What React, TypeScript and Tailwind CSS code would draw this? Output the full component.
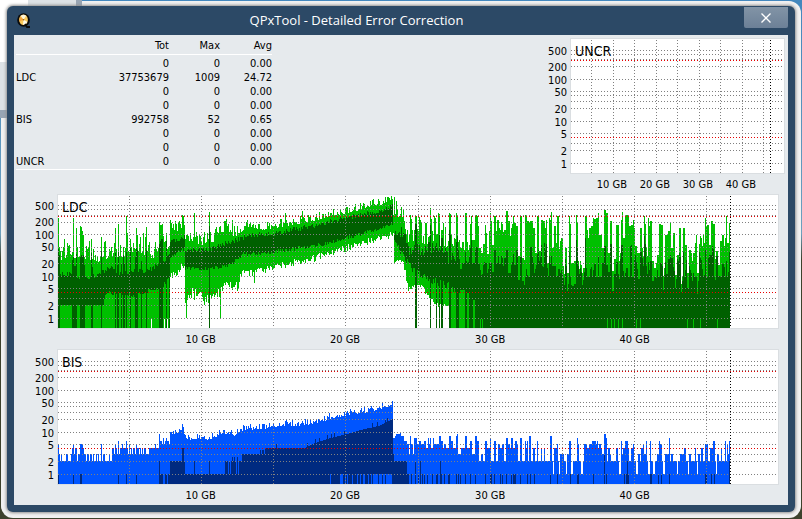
import { useMemo } from "react";

type Row = { label: string; tot: string; max: string; avg: string };

const ROWS: Row[] = [
  { label: "", tot: "0", max: "0", avg: "0.00" },
  { label: "LDC", tot: "37753679", max: "1009", avg: "24.72" },
  { label: "", tot: "0", max: "0", avg: "0.00" },
  { label: "", tot: "0", max: "0", avg: "0.00" },
  { label: "BIS", tot: "992758", max: "52", avg: "0.65" },
  { label: "", tot: "0", max: "0", avg: "0.00" },
  { label: "", tot: "0", max: "0", avg: "0.00" },
  { label: "UNCR", tot: "0", max: "0", avg: "0.00" },
];

const PLOT_W = 720;

// log scale rows of the plot
const GRID_Y = [11, 15, 20, 27, 40, 52, 56, 62, 69, 82, 94, 104, 111, 124];
const SHORT_GRID_Y = [10, 14, 20, 27, 39, 52, 56, 61, 68, 81, 93, 103, 110, 123];
const LIMITS_Y = [21, 98];
const SHORT_LIMITS_Y = [21, 97];
const Y_LABELS = [
  { text: "500", y: 11 },
  { text: "200", y: 27 },
  { text: "100", y: 40 },
  { text: "50", y: 52 },
  { text: "20", y: 69 },
  { text: "10", y: 82 },
  { text: "5", y: 94 },
  { text: "2", y: 111 },
  { text: "1", y: 124 },
];

// [x, value] key points, joined by straight lines
type Points = [number, number][];

function noise(x: number, seed: number) {
  let n = Math.imul(x + 17, 374761393) ^ Math.imul(seed + 5, 668265263);
  n = Math.imul(n ^ (n >>> 13), 1274126177);
  return ((n ^ (n >>> 16)) >>> 0) / 4294967296;
}

function lerp(points: Points, x: number) {
  for (let i = 1; i < points.length; i++) {
    if (x <= points[i][0]) {
      const [x0, y0] = points[i - 1];
      const [x1, y1] = points[i];
      return y0 + ((y1 - y0) * (x - x0)) / (x1 - x0 || 1);
    }
  }
  return points[points.length - 1][1];
}

function step(points: Points, x: number) {
  let value = points[0][1];
  for (const [px, py] of points) {
    if (px > x) break;
    value = py;
  }
  return value;
}

function column(x: number, top: number, bottom: number) {
  return bottom > top ? `M${x} ${Math.round(top)}h1V${Math.round(bottom)}h-1z` : "";
}

/* ---------- LDC ---------- */

const LDC_TOP: Points = [
  [0, 63], [8, 58], [25, 60], [40, 63], [52, 58], [66, 58], [78, 52], [90, 58], [96, 60], [102, 54], [108, 52], [111, 50],
  [112, 34], [118, 33], [126, 28], [127, 43], [145, 47], [155, 43], [165, 33], [172, 34], [176, 38], [190, 28], [205, 31],
  [222, 28], [240, 25], [256, 22], [272, 18], [290, 14], [306, 10], [322, 6], [334, 1], [335, 16], [345, 20],
  [349, 44], [372, 46], [385, 48], [402, 47],
];

const LDC_TOP_SPIKES: Points = [
  [0, 23], [6, 44], [11, 50], [15, 23], [18, 33], [22, 31], [23, 32], [24, 36], [25, 40], [33, 44], [43, 42], [47, 46], [51, 54],
  [57, 33], [60, 29], [68, 21], [69, 38], [75, 48], [78, 33], [79, 40], [82, 42], [85, 38], [88, 32], [97, 47], [101, 27],
  [102, 30], [103, 30], [104, 29], [108, 38], [112, 25], [124, 20], [125, 21], [136, 18], [151, 17], [166, 26], [174, 25],
  [227, 18], [244, 16], [352, 20], [353, 24], [357, 21], [358, 21], [361, 22], [362, 25], [363, 27], [367, 28], [368, 28],
  [372, 13], [373, 24], [376, 21], [377, 23], [380, 18], [381, 19], [385, 28], [387, 32], [391, 18], [392, 19], [398, 18],
  [399, 21], [400, 47],
];

const LDC_DARK_TOP: Points = [
  [0, 79], [10, 80], [25, 84], [40, 80], [52, 72], [58, 80], [75, 76], [90, 76], [104, 68], [111, 60], [112, 48], [126, 42],
  [127, 56], [150, 55], [165, 50], [180, 45], [190, 41], [206, 40], [222, 38], [240, 34], [258, 31], [272, 27], [288, 23],
  [306, 20], [322, 16], [334, 11], [335, 38], [345, 44], [350, 60], [372, 58], [390, 66], [402, 70],
];

const LDC_DARK_BOTTOM: Points = [
  [0, 111], [45, 110], [48, 98], [75, 100], [90, 96], [104, 92], [111, 80], [112, 61], [126, 54], [127, 73], [150, 74],
  [172, 70], [180, 64], [185, 59], [206, 58], [240, 53], [272, 48], [292, 42], [306, 38], [322, 33], [335, 28],
  [336, 46], [346, 60], [354, 72], [372, 82], [390, 89], [402, 97],
];

const LDC_BOTTOM: Points = [
  [0, 134], [111, 134], [112, 81], [118, 77], [126, 68], [127, 106], [129, 104], [134, 95], [144, 100], [150, 104],
  [155, 96], [160, 94], [172, 88], [179, 89], [184, 77], [198, 77], [215, 71], [238, 67], [256, 63], [272, 57],
  [288, 53], [306, 47], [322, 43], [335, 39], [336, 64], [345, 68], [350, 93], [362, 90], [372, 103], [378, 110],
  [393, 111], [394, 134],
];

// columns where the average reaches the floor
const LDC_FULL: [number, number][] = [
  [0, 1], [14, 16], [17, 18], [22, 26], [33, 34], [43, 43], [57, 57], [59, 60], [63, 63], [65, 66], [68, 68], [72, 72],
  [77, 79], [83, 83], [88, 88], [101, 104], [108, 108], [111, 111], [151, 151], [357, 358], [372, 372], [378, 378],
  [381, 381], [383, 384], [391, 392], [398, 400], [402, 402], [407, 408],
];

// unreadable half of the disc: every step is one sample
const LDC_TAIL: Points = [
  [402, 45], [404, 47], [407, 18], [409, 47], [411, 50], [412, 21], [414, 45], [417, 20], [419, 21], [420, 23], [421, 53],
  [423, 58], [425, 49], [427, 30], [429, 51], [431, 36], [432, 18], [434, 50], [436, 21], [438, 28], [439, 25], [442, 27],
  [444, 29], [446, 27], [448, 16], [450, 26], [452, 33], [454, 21], [456, 20], [458, 23], [460, 61], [462, 21], [464, 63],
  [466, 65], [467, 20], [469, 26], [471, 19], [472, 26], [475, 33], [477, 58], [479, 21], [481, 56], [483, 25], [485, 26],
  [487, 25], [489, 60], [491, 23], [492, 17], [494, 53], [496, 31], [498, 48], [499, 21], [501, 46], [503, 43], [505, 71],
  [507, 53], [509, 70], [511, 21], [513, 68], [516, 66], [518, 20], [520, 66], [523, 70], [525, 73], [527, 21], [529, 35],
  [531, 33], [533, 23], [536, 24], [538, 23], [540, 18], [541, 40], [544, 53], [546, 15], [548, 18], [550, 58], [552, 26],
  [554, 76], [556, 56], [558, 30], [561, 58], [563, 17], [565, 35], [567, 20], [570, 21], [571, 31], [573, 30], [575, 25],
  [577, 51], [579, 58], [582, 33], [584, 53], [586, 21], [588, 53], [590, 23], [592, 26], [594, 66], [596, 73], [598, 60],
  [601, 21], [603, 30], [605, 73], [607, 40], [610, 36], [612, 27], [613, 53], [615, 30], [617, 80], [619, 60], [621, 33],
  [623, 81], [625, 33], [627, 50], [629, 78], [631, 55], [633, 58], [635, 50], [637, 40], [639, 78], [641, 41], [643, 43],
  [645, 40], [647, 23], [649, 30], [651, 50], [653, 26], [655, 21], [657, 56], [660, 70], [662, 46], [664, 40], [666, 43],
  [668, 21], [669, 40], [671, 20],
];

const LDC_FLOOR_GAPS = [422, 424, 549, 553, 556, 560, 564, 578, 582, 629, 635, 642, 659];

function buildLdc() {
  const spikes = new Map(LDC_TOP_SPIKES);
  let light = "";
  let dark = "";
  for (let x = 0; x < 672; x++) {
    if (x < 402) {
      const rough = x < 112 ? 12 : x < 182 ? 9 : x > 335 ? 12 : 5;
      const jitter = noise(x, 1);
      const top = Math.max(0, spikes.get(x) ?? lerp(LDC_TOP, x) + 4 - jitter * jitter * rough * 1.6);
      let darkTop = lerp(LDC_DARK_TOP, x) + 2 - noise(x, 2) * (x > 340 ? 14 : 5);
      let darkBottom = lerp(LDC_DARK_BOTTOM, x) - 2 + noise(x, 3) * (x > 340 ? 8 : 4);
      let bottom = lerp(LDC_BOTTOM, x) - 3 + noise(x, 4) * (x > 126 && x < 182 ? 12 : 7);
      if (x < 46) darkBottom = 110;
      if (LDC_FULL.some(([a, b]) => x >= a && x <= b)) {
        darkBottom = 134;
        bottom = 134;
        darkTop = Math.max(top + 8, darkTop - 22);
      }
      if (x > 392 || x < 112) bottom = 134;
      if (x === 93 || x === 106 || x === 109) bottom = 124;
      if (x === 128 || x === 162) bottom = 123;
      if (x === 196) bottom = 88;
      light += column(x, top, Math.min(134, bottom));
      dark += column(x, Math.max(top + 4, darkTop), Math.min(134, darkBottom));
    } else {
      const top = step(LDC_TAIL, x) + (noise(x, 5) > 0.75 ? 8 : 0);
      const base = x < 440 ? 68 : 82;
      const slack = noise(x >> 1, 6);
      const darkTop = top > 48 ? top + 3 + slack * 24 : Math.min(base, top + 20 + slack * 46);
      let darkBottom = LDC_FLOOR_GAPS.includes(x) ? 124 : 134;
      if (x < 407) darkBottom = 95;
      if (x === 409 || x === 410) darkBottom = 98;
      if (x === 415 || x === 416) darkBottom = 105;
      light += column(x, top, 134);
      dark += column(x, Math.min(106, darkTop), darkBottom);
    }
  }
  return { light, dark };
}

/* ---------- BIS ---------- */

const BIS_TOP: Points = [
  [112, 82], [118, 83], [124, 77], [127, 85], [130, 88], [140, 87], [150, 88], [163, 83], [172, 82], [176, 85], [180, 80],
  [190, 78], [206, 77], [222, 74], [240, 74], [256, 72], [272, 67], [290, 63], [306, 61], [320, 58], [329, 56], [334, 52],
];

const BIS_DARK: Points = [
  [112, 111], [183, 111], [184, 104], [206, 104], [207, 98], [247, 98], [254, 94], [272, 88], [289, 84], [306, 79], [320, 76],
  [334, 69],
];

const BIS_SPIKES: Points = [
  [0, 5], [14, 4], [15, 5], [17, 4], [18, 4], [22, 5], [23, 5], [24, 5], [25, 4], [43, 5], [57, 5], [60, 6], [64, 5], [68, 6],
  [71, 5], [78, 5], [97, 5], [101, 9], [105, 7], [108, 7],
];

const LEVEL_Y = [134, 124, 111, 104, 98, 94, 91, 88, 86, 84, 82];

const BIS_TAIL: Points = [
  [335, 7], [337, 8], [338, 9], [342, 10], [343, 8], [346, 6], [349, 5], [351, 3], [352, 8], [353, 5], [355, 3], [356, 7],
  [359, 5], [361, 6], [363, 5], [366, 6], [368, 4], [370, 7], [371, 5], [372, 7], [373, 4], [375, 7], [376, 5], [378, 5],
  [381, 8], [383, 6], [385, 4], [386, 5], [388, 4], [391, 8], [393, 6], [395, 4], [398, 8], [399, 9], [400, 3], [403, 4],
  [407, 8], [409, 4], [412, 6], [414, 3], [417, 8], [419, 6], [421, 2], [423, 3], [425, 2], [427, 6], [429, 4], [432, 7],
  [433, 2], [436, 6], [438, 2], [440, 5], [442, 4], [444, 5], [446, 2], [448, 7], [450, 5], [452, 4], [453, 7], [455, 4],
  [457, 6], [459, 5], [460, 2], [462, 7], [464, 2], [467, 6], [468, 4], [469, 6], [470, 2], [471, 8], [473, 2], [475, 4],
  [477, 2], [479, 6], [480, 2], [483, 4], [484, 2], [486, 4], [487, 2], [492, 8], [494, 2], [495, 1], [496, 4], [499, 5],
  [500, 2], [501, 1], [502, 3], [505, 3], [506, 2], [508, 1], [509, 3], [511, 6], [513, 1], [515, 2], [519, 7], [520, 5],
  [521, 2], [523, 1], [525, 2], [526, 5], [529, 4], [531, 5], [534, 6], [538, 5], [539, 6], [540, 4], [541, 5], [543, 4],
  [544, 3], [546, 9], [548, 7], [549, 2], [550, 4], [552, 3], [553, 2], [558, 4], [560, 2], [561, 1], [563, 6], [564, 3],
  [565, 4], [567, 6], [570, 4], [571, 2], [573, 4], [575, 5], [576, 2], [578, 1], [580, 3], [582, 2], [583, 4], [585, 5],
  [586, 3], [588, 6], [589, 2], [590, 1], [592, 6], [593, 2], [595, 1], [597, 2], [599, 3], [601, 6], [602, 5], [604, 2],
  [605, 1], [607, 3], [609, 3], [611, 7], [612, 2], [613, 3], [615, 2], [619, 1], [620, 2], [622, 3], [626, 4], [628, 2],
  [630, 1], [631, 3], [633, 2], [637, 4], [638, 2], [639, 1], [640, 3], [642, 2], [643, 4], [645, 2], [647, 5], [650, 2],
  [652, 4], [655, 6], [657, 2], [658, 1], [659, 3], [661, 2], [663, 4], [664, 2], [666, 2], [667, 6], [668, 2], [669, 5],
  [670, 3], [671, 6],
];

const BIS_DARK_ONE = [
  0, 15, 22, 23, 60, 68, 78, 102, 103, 104, 107, 108, 110, 111, 349, 350, 353, 357, 360, 364, 366, 369, 374, 378, 379, 383,
  386, 390, 391, 398, 400, 402, 407, 412, 417, 427, 432, 433, 436, 442, 444, 448, 453, 455, 456, 457, 462, 469, 472, 476,
  492, 499, 512, 519, 520, 535, 548, 566, 568, 569, 570, 592, 593, 600, 603, 611, 647, 648, 653, 656,
];
const BIS_DARK_TWO = [101, 336, 337, 339, 341, 342, 343, 344, 345, 346, 357, 362, 382, 569];
const BIS_FLOOR_BLUE = [
  272, 282, 283, 284, 287, 289, 294, 299, 302, 305, 306, 310, 313, 315, 316, 317, 318, 319, 321, 322, 323, 325, 326, 328,
  329, 330, 331, 332, 333,
];

function buildBis() {
  const spikes = new Map(BIS_SPIKES);
  let light = "";
  let dark = "";
  for (let x = 0; x < 672; x++) {
    if (x < 112) {
      const n = noise(x, 8);
      const base = x < 54 ? (n > 0.52 ? 3 : 2) : x < 75 ? (n > 0.4 ? 4 : 3) : x < 92 ? (n > 0.6 ? 4 : 3) : x < 102 ? 4 : n > 0.4 ? 6 : 5;
      light += column(x, LEVEL_Y[spikes.get(x) ?? base], 134);
    } else if (x < 335) {
      const rough = x > 325 ? 3 : 6;
      light += column(x, lerp(BIS_TOP, x) + 2 - noise(x, 9) ** 2 * rough, 134);
      let darkTop = lerp(BIS_DARK, x) - (noise(x, 10) > 0.85 ? 4 : 0);
      if (x > 126 && x < 167 && ![136, 151].includes(x)) darkTop = 124;
      if (x >= 167 && x < 184 && noise(x, 11) > 0.6) darkTop = 124;
      if (x === 124 || x === 125) darkTop = 98;
      dark += column(x, darkTop, BIS_FLOOR_BLUE.includes(x) ? 124 : 134);
    } else {
      light += column(x, LEVEL_Y[step(BIS_TAIL, x)], 134);
    }
    if (BIS_DARK_TWO.includes(x)) dark += column(x, 111, 134);
    else if (BIS_DARK_ONE.includes(x)) dark += column(x, 124, 134);
    else if (x >= 335 && x < 349) dark += column(x, x === 335 ? 104 : 111, 134);
  }
  dark += column(546, 104, 134) + column(671, 111, 134);
  return { light, dark };
}

type ChartProps = {
  title: string;
  gridX: number[];
  endX: number;
  width: number;
  labels: { text: string; x: string }[];
  short?: boolean;
  light?: string;
  dark?: string;
  lightClass?: string;
  darkClass?: string;
};

function Chart({ title, gridX, endX, width, labels, short, light, dark, lightClass, darkClass }: ChartProps) {
  // a short plot is one row lower in height
  const cut = short ? 1 : 0;
  const height = 134 - cut;
  const gridY = short ? SHORT_GRID_Y : GRID_Y;
  const limitsY = short ? SHORT_LIMITS_Y : LIMITS_Y;

  return (
    <figure className="flex" aria-label={title}>
      <svg className="h-[135px] w-[43px] shrink-0 text-[11px]" aria-hidden="true">
        {Y_LABELS.map((l) => (
          <text key={l.text} x="40" y={l.y + 6 - cut} textAnchor="end">
            {l.text}
          </text>
        ))}
      </svg>
      <div className="min-w-0 flex-1">
        <div className="border border-[#dadee1] bg-white">
          <svg className={short ? "block h-[133px] w-full" : "block h-[134px] w-full"} role="img" aria-label={`${title} errors`}>
            <svg viewBox={`0 0 ${width} ${height}`} width="100%" height="100%" preserveAspectRatio="none" shapeRendering="crispEdges">
              {light && <path d={light} className={lightClass} />}
              {dark && <path d={dark} className={darkClass} />}
              <g className="stroke-[#808080]" strokeDasharray="1 2">
                {gridY.map((y) => (
                  <line key={y} x1="0" x2={width} y1={y + 0.5} y2={y + 0.5} />
                ))}
                {gridX.map((x) => (
                  <line key={x} x1={x + 0.5} x2={x + 0.5} y1="1" y2={height} />
                ))}
              </g>
              <g className="stroke-[#e80000]" strokeDasharray="1 2">
                {limitsY.map((y) => (
                  <line key={y} x1="0" x2={width} y1={y + 0.5} y2={y + 0.5} />
                ))}
              </g>
              <line x1={endX + 0.5} x2={endX + 0.5} y1="1" y2={height} className="stroke-black" strokeDasharray="1 2" />
            </svg>
            <text x="4" y="17" className="text-[14px]">
              {title}
            </text>
          </svg>
        </div>
        <svg className="block h-5 w-full text-[11px]" aria-hidden="true">
          {labels.map((l) => (
            <text key={l.text} x={l.x} y="14" textAnchor="middle">
              {l.text}
            </text>
          ))}
        </svg>
      </div>
    </figure>
  );
}

const MAIN_GRID = [71, 143, 215, 287, 360, 432, 504, 576, 648];
const MAIN_LABELS = [
  { text: "10 GB", x: "19.9%" },
  { text: "20 GB", x: "39.9%" },
  { text: "30 GB", x: "60%" },
  { text: "40 GB", x: "80%" },
];
const SMALL_GRID = [20, 42, 63, 85, 106, 128, 149, 171, 192];
const SMALL_LABELS = [
  { text: "10 GB", x: "19.5%" },
  { text: "20 GB", x: "39.5%" },
  { text: "30 GB", x: "59.5%" },
  { text: "40 GB", x: "79.5%" },
];

function AppIcon() {
  return (
    <svg className="size-4" viewBox="0 0 16 16" aria-hidden="true">
      <ellipse cx="7.5" cy="7" rx="6.3" ry="6.8" fill="#0b0b0b" />
      <ellipse cx="7.5" cy="6.8" rx="4.4" ry="5.2" fill="#f8c95c" />
      <path d="M7.5 6.8 4.6 2.8Q7.5 .8 10.2 2.8z" fill="#fff6d8" />
      <path d="M7.5 6.8 3.4 8.5Q3 5.5 4.5 3.5z" fill="#f3a53c" />
      <path d="M7.5 6.8 11.4 9Q9.8 12 7 11.8z" fill="#fffbe9" />
      <circle cx="7.5" cy="6.8" r=".8" fill="#8a5a20" />
      <path d="M9 11 11 14h3" stroke="#0b0b0b" strokeWidth="1.8" fill="none" />
    </svg>
  );
}

export default function App() {
  const ldc = useMemo(buildLdc, []);
  const bis = useMemo(buildBis, []);

  return (
    <div className="relative min-h-screen bg-linear-to-b from-[#4387bd] from-0% via-[#6da0bd] via-45% to-[#3d412c] to-50% p-px font-['DejaVu_Sans_Condensed','DejaVu_Sans',sans-serif] text-black">
      <div className="rounded-xl bg-[#f1f1f1] px-1.5 pt-[5px] pb-1.5">
        {/* Window behind */}
        <div className="absolute top-0 left-0 flex h-[118px] w-[82px] flex-col border-r-[6px] border-b-8 border-[#98a5b4] bg-white" aria-hidden="true">
          <div className="flex h-[62px] justify-end">
            <div className="w-12 bg-[#dde2e6]" />
          </div>
          <div className="flex-1 bg-[#dde2e6]" />
        </div>

        <main className="relative rounded-md bg-[#2c4966] px-[7px] pb-[7px] shadow-[0_0_3px_1px_#909090]">
          <header className="flex h-[29px] items-center pl-0.5">
            <AppIcon />
            <h1 className="flex-1 pr-[63px] text-center font-['Open_Sans','Noto_Sans',sans-serif] text-[13px] text-white">
              QPxTool - Detailed Error Correction
            </h1>
            <button
              type="button"
              aria-label="Close"
              className="mt-px flex h-[21px] w-11 items-center justify-center self-start rounded-b-xs bg-linear-to-b from-[#8294a6] to-[#6c8097] text-white"
            >
              <svg className="size-[10px]" viewBox="0 0 10 10" aria-hidden="true">
                <path d="M.5.5l9 9M9.5.5l-9 9" stroke="currentColor" strokeWidth="1.3" />
              </svg>
            </button>
          </header>

          <div className="bg-[#e6eaed]">
            <div className="flex items-start justify-between pt-[3px] pr-[3px] pl-0.5">
              <table className="w-64 table-fixed text-[11px] leading-[14px]">
                <thead>
                  <tr className="h-4 border-b border-white align-middle">
                    <th className="w-[60px]" />
                    <th className="text-right font-normal">Tot</th>
                    <th className="w-[51px] text-right font-normal">Max</th>
                    <th className="w-[52px] text-right font-normal">Avg</th>
                  </tr>
                </thead>
                <tbody className="border-b border-white before:block before:h-0.5">
                  {ROWS.map((row, i) => (
                    <tr key={i} className="h-3.5">
                      <th className="text-left font-normal">{row.label}</th>
                      <td className="text-right">{row.tot}</td>
                      <td className="text-right">{row.max}</td>
                      <td className="text-right">{row.avg}</td>
                    </tr>
                  ))}
                </tbody>
              </table>
              <div className="w-[258px]">
                <Chart title="UNCR" gridX={SMALL_GRID} endX={199} width={213} labels={SMALL_LABELS} />
              </div>
            </div>
            <div className="pr-[9px]">
              <Chart
                title="LDC"
                gridX={MAIN_GRID}
                endX={672}
                width={PLOT_W}
                labels={MAIN_LABELS}
                short
                light={ldc.light}
                dark={ldc.dark}
                lightClass="fill-[#00c000]"
                darkClass="fill-[#006000]"
              />
              <Chart
                title="BIS"
                gridX={MAIN_GRID}
                endX={672}
                width={PLOT_W}
                labels={MAIN_LABELS}
                light={bis.light}
                dark={bis.dark}
                lightClass="fill-[#0055ff]"
                darkClass="fill-[#002a80]"
              />
            </div>
          </div>
        </main>
      </div>
    </div>
  );
}
